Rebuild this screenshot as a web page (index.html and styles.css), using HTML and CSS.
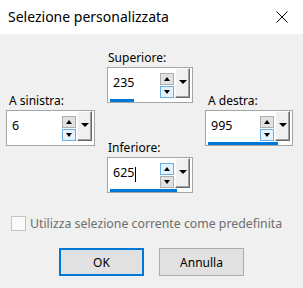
FILE: index.html
```html
<!DOCTYPE html>
<html lang="it">
<head>
    <meta charset="utf-8">
    <title>Selezione personalizzata</title>
    <link rel="stylesheet" href="styles.css">
</head>
<body>
    <div class="titolo">
        <span class="titolo-testo">Selezione personalizzata</span>
        <svg class="chiudi" width="12" height="12" viewBox="0 0 12 12">
            <path d="M0.5 0.5 L11.5 11.5 M11.5 0.5 L0.5 11.5" stroke="#000" stroke-width="1" fill="none"/>
        </svg>
    </div>
    <div class="campi">
        <div class="colonna colonna-lato">
            <div class="gruppo">
                <label class="etichetta">A sinistra:</label>
                <div class="casella">
                    <div class="riga">
                        <span class="valore">6</span>
                        <div class="spin">
                            <span class="freccia su"></span>
                            <span class="freccia giu attiva"></span>
                        </div>
                        <span class="tendina"></span>
                    </div>
                    <div class="barra" style="width: 0px"></div>
                </div>
            </div>
        </div>
        <div class="colonna colonna-centro">
            <div class="gruppo">
                <label class="etichetta">Superiore:</label>
                <div class="casella">
                    <div class="riga">
                        <span class="valore">235</span>
                        <div class="spin">
                            <span class="freccia su"></span>
                            <span class="freccia giu attiva"></span>
                        </div>
                        <span class="tendina"></span>
                    </div>
                    <div class="barra" style="width: 24px"></div>
                </div>
            </div>
            <div class="gruppo">
                <label class="etichetta">Inferiore:</label>
                <div class="casella">
                    <div class="riga">
                        <span class="valore">625<span class="cursore"></span></span>
                        <div class="spin">
                            <span class="freccia su attiva"></span>
                            <span class="freccia giu"></span>
                        </div>
                        <span class="tendina"></span>
                    </div>
                    <div class="barra" style="width: 67px"></div>
                </div>
            </div>
        </div>
        <div class="colonna colonna-lato">
            <div class="gruppo">
                <label class="etichetta">A destra:</label>
                <div class="casella">
                    <div class="riga">
                        <span class="valore">995</span>
                        <div class="spin">
                            <span class="freccia su"></span>
                            <span class="freccia giu attiva"></span>
                        </div>
                        <span class="tendina"></span>
                    </div>
                    <div class="barra" style="width: 70px"></div>
                </div>
            </div>
        </div>
    </div>
    <div class="opzione">
        <span class="casella-spunta"></span>
        <span class="opzione-testo">Utilizza selezione corrente come predefinita</span>
    </div>
    <div class="pulsanti">
        <button class="pulsante predefinito">OK</button>
        <button class="pulsante">Annulla</button>
    </div>
</body>
</html>
```

FILE: styles.css
```css
body {
    margin: 0;
    background-color: #f0f0f0;
    font-family: "Noto Sans", sans-serif;
    font-size: 12px;
    color: #000;
}
.titolo {
    display: flex;
    justify-content: space-between;
    align-items: flex-start;
    height: 34px;
    box-sizing: border-box;
    padding: 7px 15px 0 8px;
    background-color: #fff;
}
.titolo-testo {
    font-size: 14px;
    line-height: 19px;
}
.chiudi {
    margin-top: 4px;
}
.campi {
    display: grid;
    grid-template-columns: 89px 86px 88px;
    column-gap: 12px;
    padding-left: 6px;
    align-items: start;
}
.colonna-centro {
    padding-top: 16px;
}
.colonna-lato {
    padding-top: 59px;
}
.gruppo + .gruppo {
    margin-top: 37px;
}
.etichetta {
    display: block;
    line-height: 16px;
    margin-bottom: 1px;
    padding-left: 1px;
}
.colonna-lato .etichetta {
    padding-left: 3px;
}
.casella {
    border: 1px solid #a5a5a5;
    background-color: #fff;
}
.riga {
    display: flex;
    height: 30px;
}
.valore {
    flex: 1;
    padding-left: 5px;
    font-size: 12.5px;
    line-height: 30px;
}
.cursore {
    display: inline-block;
    width: 1px;
    height: 15px;
    background-color: #000;
    vertical-align: -5px;
    margin-left: 1px;
}
.spin {
    display: flex;
    flex-direction: column;
    gap: 1px;
    width: 14px;
    padding-top: 5px;
    margin-right: 1px;
}
.freccia {
    display: flex;
    align-items: center;
    justify-content: center;
    height: 12px;
    box-sizing: border-box;
    border: 1px solid #adadad;
    background-color: #e1e1e1;
}
.freccia.attiva {
    border-color: #6aaee8;
    background-color: #e5f1fb;
}
.freccia::before {
    content: "";
    border-left: 3.5px solid transparent;
    border-right: 3.5px solid transparent;
}
.su::before {
    border-bottom: 4px solid #000;
}
.giu::before {
    border-top: 4px solid #000;
}
.tendina {
    display: flex;
    justify-content: center;
    width: 15px;
    height: 30px;
    box-sizing: border-box;
    padding-top: 11px;
    margin-right: 2px;
    border: 1px solid;
    border-color: #fcfcfc #696969 #696969 #fcfcfc;
    box-shadow: inset -1px -1px 0 #a0a0a0;
    background-color: #f0f0f0;
}
.tendina::before {
    content: "";
    border-left: 4px solid transparent;
    border-right: 4px solid transparent;
    border-top: 4px solid #000;
    height: 0;
}
.barra {
    height: 3px;
    margin: 1px 0 0 2px;
    background-color: #0078d7;
}
.opzione {
    display: flex;
    align-items: flex-start;
    gap: 4px;
    margin-top: 23px;
    padding-left: 11px;
    line-height: 16px;
    color: #6d6d6d;
}
.opzione-testo {
    font-size: 12.3px;
}
.casella-spunta {
    width: 15px;
    height: 15px;
    box-sizing: border-box;
    border: 1px solid #c4c4c4;
    background-color: #fafafa;
}
.pulsanti {
    display: flex;
    justify-content: center;
    gap: 15px;
    margin-top: 16px;
}
.pulsante {
    width: 85px;
    height: 28px;
    padding: 0;
    box-sizing: border-box;
    border: 1px solid #adadad;
    background-color: #e1e1e1;
    font-family: inherit;
    font-size: 12px;
    color: #000;
}
.predefinito {
    border: 2px solid #0078d7;
}
```
